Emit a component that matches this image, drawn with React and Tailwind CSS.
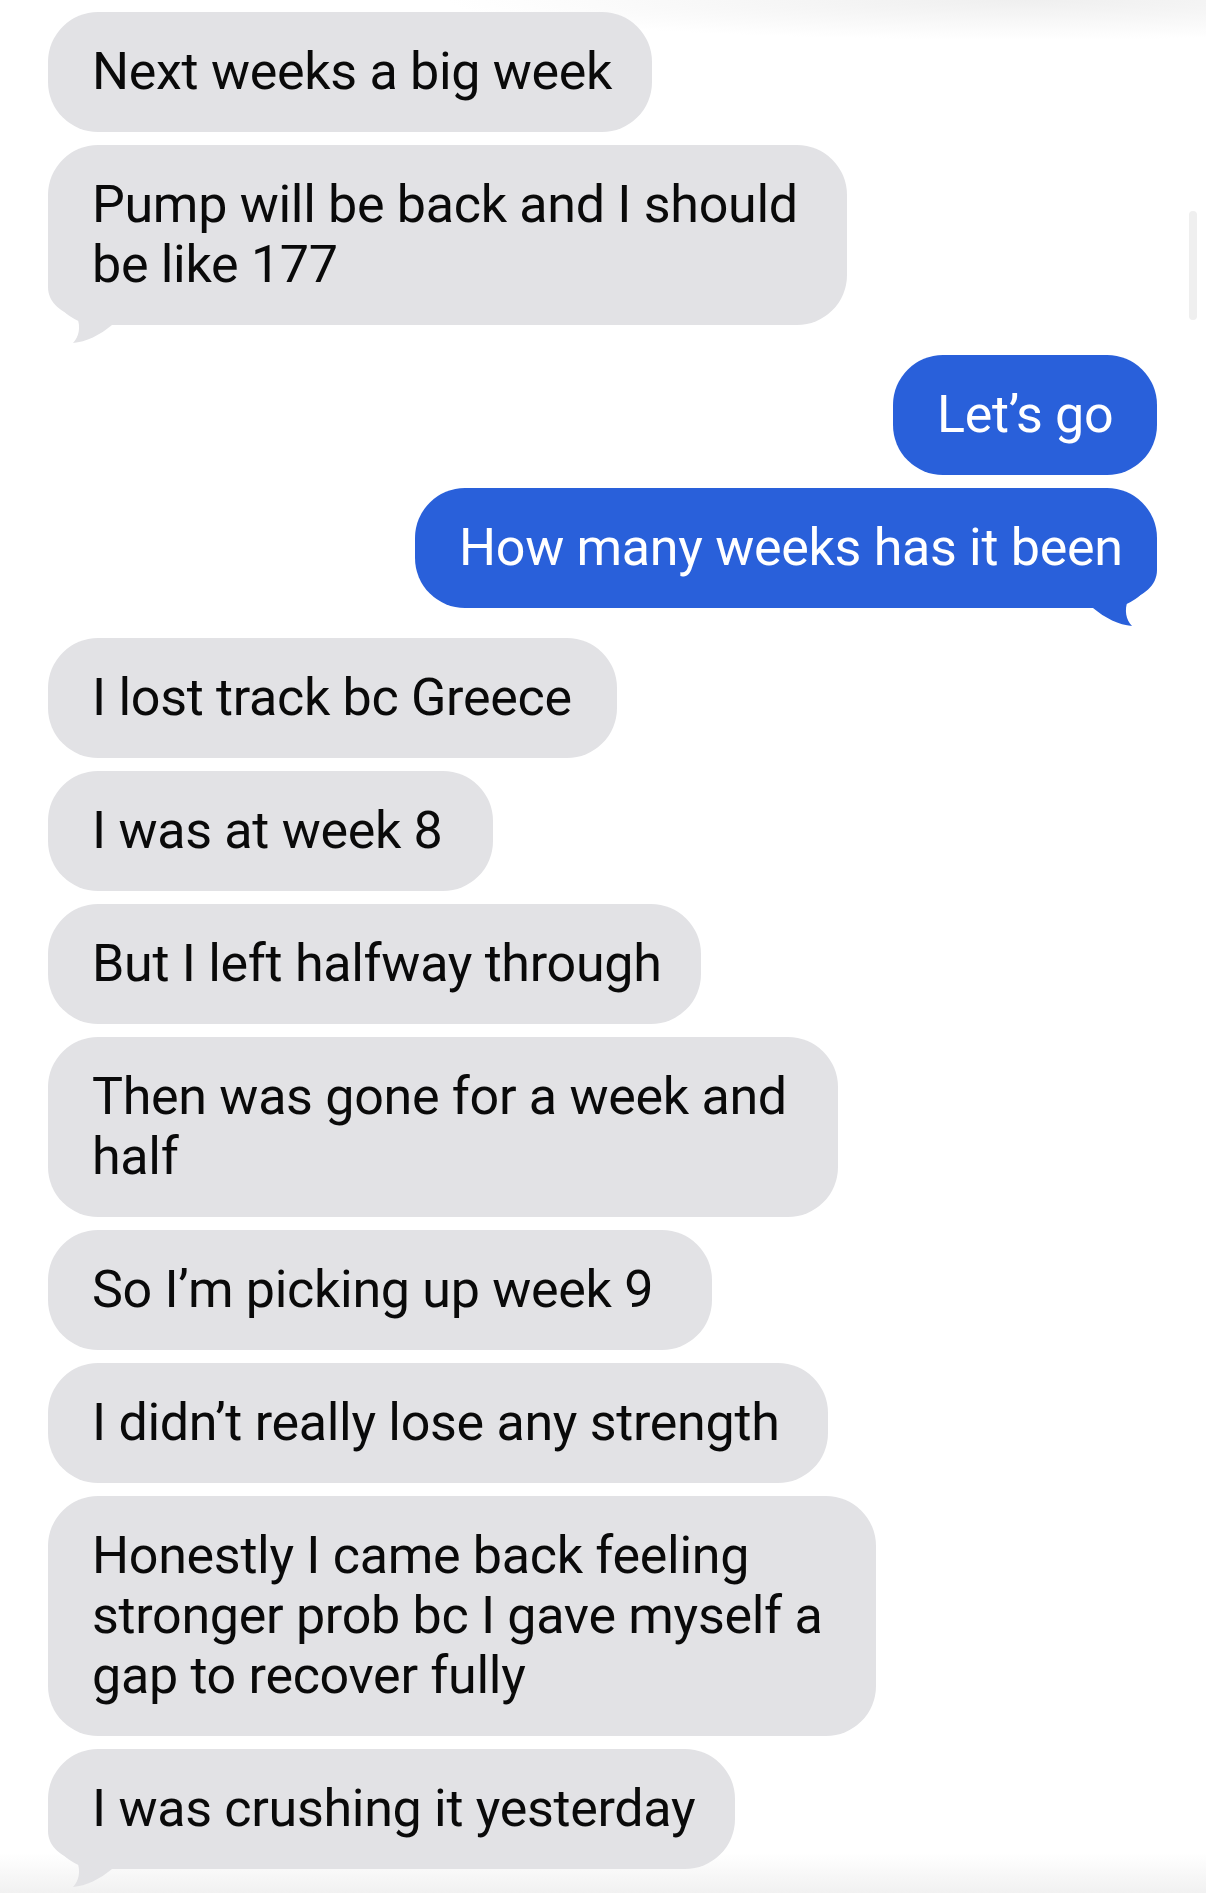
import React from "react";

const GRAY = "#e2e2e5";
const BLUE = "#2960da";

// messages grouped by sender; groups sit further apart than bubbles inside a group
const groups = [
  {
    side: "in",
    items: [
      { w: "w-[604px]", lines: ["Next weeks a big week"] },
      { w: "w-[799px]", lines: ["Pump will be back and I should", "be like 177"], tail: true },
    ],
  },
  {
    side: "out",
    items: [
      { w: "w-[264px]", lines: ["Let’s go"] },
      { w: "w-[742px]", lines: ["How many weeks has it been"], tail: true },
    ],
  },
  {
    side: "in",
    items: [
      { w: "w-[569px]", lines: ["I lost track bc Greece"] },
      { w: "w-[445px]", lines: ["I was at week 8"] },
      { w: "w-[653px]", lines: ["But I left halfway through"] },
      { w: "w-[790px]", lines: ["Then was gone for a week and", "half"] },
      { w: "w-[664px]", lines: ["So I’m picking up week 9"] },
      { w: "w-[780px]", lines: ["I didn’t really lose any strength"] },
      { w: "w-[828px]", lines: ["Honestly I came back feeling", "stronger prob bc I gave myself a", "gap to recover fully"] },
      { w: "w-[687px]", lines: ["I was crushing it yesterday"], tail: true },
    ],
  },
];

function Tail({ color, flip }) {
  return (
    <svg
      width="70"
      height="80"
      viewBox="0 0 70 80"
      className={flip ? "absolute right-0 bottom-[-20px] -scale-x-100" : "absolute left-0 bottom-[-20px]"}
    >
      <path d="M0,0 L0,22 C0,38 14,48 29,52 C33,62 31,72 25,78 C38,77 52,70 64,60 L64,0 Z" fill={color} />
    </svg>
  );
}

function Bubble({ msg, out }) {
  return (
    <div
      className={`relative ${msg.w} rounded-[50px] px-[44px] py-[30px] text-[52px] leading-[60px] tracking-[-0.3px] whitespace-nowrap ${
        out ? "bg-[#2960da] text-white" : "bg-[#e2e2e5] text-[#0a0a0a]"
      }`}
    >
      {msg.tail && <Tail color={out ? BLUE : GRAY} flip={out} />}
      <div className="relative">
        {msg.lines.map((l, i) => (
          <div key={i}>{l}</div>
        ))}
      </div>
    </div>
  );
}

export default function App() {
  return (
    <div
      className="relative h-[1893px] w-full overflow-hidden bg-white"
      style={{ fontFamily: "Roboto, 'Noto Sans', sans-serif" }}
    >
      <div className="absolute left-0 right-0 top-0 h-[50px] bg-[radial-gradient(ellipse_60%_100%_at_85%_0%,#efefef,rgba(255,255,255,0)_80%)]" />
      <div className="absolute bottom-0 left-0 right-0 h-[40px] bg-gradient-to-b from-white/0 to-[#f1f1f1]" />
      <div className="absolute right-[9px] top-[211px] h-[109px] w-[8px] rounded-full bg-[#efefef]" />

      <div className="relative flex flex-col gap-[30px] pl-[48px] pr-[49px] pt-[12px]">
        {groups.map((g, gi) => (
          <div key={gi} className={`flex flex-col gap-[13px] ${g.side === "out" ? "items-end" : "items-start"}`}>
            {g.items.map((m, i) => (
              <Bubble key={i} msg={m} out={g.side === "out"} />
            ))}
          </div>
        ))}
      </div>
    </div>
  );
}
